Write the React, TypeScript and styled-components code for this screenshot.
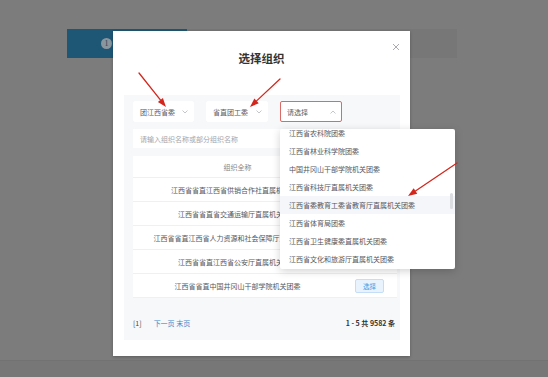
import React from "react";
import styled, { createGlobalStyle } from "styled-components";

const Global = createGlobalStyle`
  html, body { margin: 0; padding: 0; }
  body { font-family: "Noto Sans CJK SC", "Noto Sans", sans-serif; background: #7c7c7c; }
`;

const Page = styled.div`
  position: relative;
  width: 548px;
  height: 377px;
  overflow: hidden;
  background: #7c7c7c;
  display: flex;
  flex-direction: column;
  padding-top: 29px;
  box-sizing: border-box;
`;

const StepBar = styled.div`
  margin-left: 67px;
  width: 390px;
  height: 29px;
  display: flex;
`;

const ActiveStep = styled.div`
  width: 120px;
  background: #1d5775;
  display: flex;
  align-items: center;
  padding-left: 34px;
  box-sizing: border-box;
`;

const StepNum = styled.span`
  width: 11px;
  height: 11px;
  border-radius: 50%;
  background: #8a969e;
  color: #2f4250;
  font-size: 8px;
  line-height: 11px;
  text-align: center;
  font-family: "Liberation Serif", serif;
`;

const RestStep = styled.div`
  flex: 1;
  background: #777777;
`;

const Spacer = styled.div`
  flex: 1;
`;

const BottomBand = styled.div`
  height: 16px;
  background: #777777;
  border-top: 1px solid #727272;
`;

const Modal = styled.div`
  position: absolute;
  left: 113px;
  top: 31px;
  width: 297px;
  height: 325px;
  background: #ffffff;
  box-shadow: 0 1px 3px rgba(0, 0, 0, 0.25);
  display: flex;
  flex-direction: column;
`;

const Close = styled.div`
  position: absolute;
  top: 12px;
  right: 10px;
  width: 8px;
  height: 8px;
  display: flex;
`;

const Title = styled.div`
  margin-top: 20px;
  text-align: center;
  font-size: 11.5px;
  line-height: 14px;
  font-weight: 700;
  color: #333;
`;

const Panel = styled.div`
  position: relative;
  margin: 30px 10px 0 11px;
  height: 245px;
  background: #f7f8fa;
  padding: 6px 3px 0 9px;
  box-sizing: border-box;
  display: flex;
  flex-direction: column;
`;

const SelectRow = styled.div`
  display: flex;
  gap: 12px;
  height: 21px;
`;

const SelectWrap = styled.div`
  position: relative;
`;

const Select = styled.div<{ $open?: boolean; $w: number }>`
  width: ${(p) => p.$w}px;
  height: 21px;
  box-sizing: border-box;
  background: #fff;
  border: 1px solid ${(p) => (p.$open ? "#dc6a66" : "#fff")};
  border-radius: 2px;
  padding: 0 5px 0 6px;
  display: flex;
  align-items: center;
  justify-content: space-between;
  font-size: 7px;
  color: #5a5d63;
`;

const SearchRow = styled.div`
  margin-top: 7px;
  height: 19px;
  display: flex;
  gap: 7px;
`;

const SearchInput = styled.div`
  flex: 1;
  background: #fff;
  display: flex;
  align-items: center;
  padding-left: 7px;
  font-size: 7px;
  color: #a3a6ad;
`;

const SearchButton = styled.div`
  width: 35px;
  background: #4a98dc;
  border-radius: 2px;
`;

const Table = styled.div`
  margin-top: 8px;
  background: #fff;
  width: 264px;
  display: flex;
  flex-direction: column;
`;

const HeadRow = styled.div`
  height: 22px;
  display: grid;
  grid-template-columns: 209px 55px;
  align-items: center;
  border-bottom: 1px solid #eef0f4;
  box-sizing: border-box;
  font-size: 7px;
  color: #85888f;
  text-align: center;
`;

const Row = styled.div`
  height: 24px;
  display: grid;
  grid-template-columns: 209px 55px;
  align-items: center;
  border-bottom: 1px solid #eef0f4;
  box-sizing: border-box;
  font-size: 7px;
  color: #55585e;
  text-align: center;
  white-space: nowrap;
`;

const Cell = styled.div`
  display: flex;
  justify-content: center;
  align-items: center;
`;

const PickBtn = styled.div`
  width: 29px;
  height: 14px;
  box-sizing: border-box;
  background: #e8f3fe;
  border: 1px solid #c4def7;
  border-radius: 2px;
  color: #4a97de;
  font-size: 6.5px;
  line-height: 12px;
  text-align: center;
`;

const Pager = styled.div`
  margin-top: 18px;
  width: 262px;
  height: 14px;
  display: flex;
  align-items: center;
  font-size: 7px;
  color: #333;
`;

const PageNum = styled.span`
  color: #444;
  margin-right: 12px;
`;

const PageLinks = styled.span`
  color: #3e87c9;
`;

const Total = styled.span`
  margin-left: auto;
  font-weight: 700;
  color: #333;
`;

const Dropdown = styled.div`
  position: absolute;
  left: 0;
  top: 28px;
  width: 175px;
  height: 140px;
  background: #fff;
  box-shadow: 0 2px 8px rgba(0, 0, 0, 0.18);
  border-radius: 2px;
  overflow: hidden;
  z-index: 5;
`;

const OptionList = styled.div`
  margin-top: -5px;
  display: flex;
  flex-direction: column;
`;

const Option = styled.div<{ $hover?: boolean }>`
  height: 18px;
  line-height: 18px;
  padding-left: 9px;
  font-size: 7px;
  color: #55585e;
  white-space: nowrap;
  background: ${(p) => (p.$hover ? "#f4f6f9" : "transparent")};
`;

const Thumb = styled.div`
  position: absolute;
  right: 2px;
  top: 64px;
  width: 3px;
  height: 16px;
  border-radius: 2px;
  background: #dcdde0;
`;

const Annotations = styled.svg`
  position: absolute;
  left: 0;
  top: 0;
  width: 548px;
  height: 377px;
  pointer-events: none;
  z-index: 20;
`;

const Chevron = ({ up }: { up?: boolean }) => (
  <svg width="6" height="4" viewBox="0 0 6 4">
    <path
      d={up ? "M0.5 3.5 L3 1 L5.5 3.5" : "M0.5 0.5 L3 3 L5.5 0.5"}
      fill="none"
      stroke="#b4b7bd"
      strokeWidth="0.8"
    />
  </svg>
);

type Pt = [number, number];

const Arrow = ({ from, to }: { from: Pt; to: Pt }) => {
  const dx = to[0] - from[0];
  const dy = to[1] - from[1];
  const len = Math.hypot(dx, dy);
  const ux = dx / len;
  const uy = dy / len;
  const hl = 9;
  const hw = 3.2;
  const bx = to[0] - ux * hl;
  const by = to[1] - uy * hl;
  const px = -uy * hw;
  const py = ux * hw;
  return (
    <g>
      <line x1={from[0]} y1={from[1]} x2={bx} y2={by} stroke="#d3271d" strokeWidth="1.3" strokeLinecap="round" />
      <polygon
        points={`${to[0]},${to[1]} ${bx + px},${by + py} ${bx - px},${by - py}`}
        fill="#d3271d"
      />
    </g>
  );
};

const rows = [
  "江西省省直江西省供销合作社直属机关团委",
  "江西省省直省交通运输厅直属机关团委",
  "江西省省直江西省人力资源和社会保障厅直属机关团委",
  "江西省省直江西省公安厅直属机关团委",
  "江西省省直中国井冈山干部学院机关团委",
];

const options = [
  "江西省农科院团委",
  "江西省林业科学院团委",
  "中国井冈山干部学院机关团委",
  "江西省科技厅直属机关团委",
  "江西省委教育工委省教育厅直属机关团委",
  "江西省体育局团委",
  "江西省卫生健康委直属机关团委",
  "江西省文化和旅游厅直属机关团委",
];

export default function App() {
  return (
    <>
      <Global />
      <Page>
        <StepBar>
          <ActiveStep>
            <StepNum>1</StepNum>
          </ActiveStep>
          <RestStep />
        </StepBar>
        <Spacer />
        <BottomBand />

        <Modal>
          <Close>
            <svg width="8" height="8" viewBox="0 0 8 8">
              <path d="M1 1 L7 7 M7 1 L1 7" stroke="#a0a3a8" strokeWidth="0.9" />
            </svg>
          </Close>
          <Title>选择组织</Title>
          <Panel>
            <SelectRow>
              <Select $w={61}>
                <span>团江西省委</span>
                <Chevron />
              </Select>
              <Select $w={62}>
                <span>省直团工委</span>
                <Chevron />
              </Select>
              <SelectWrap>
                <Select $w={62} $open>
                  <span>请选择</span>
                  <Chevron up />
                </Select>
                <Dropdown>
                  <OptionList>
                    {options.map((o, i) => (
                      <Option key={o} $hover={i === 4}>
                        {o}
                      </Option>
                    ))}
                  </OptionList>
                  <Thumb />
                </Dropdown>
              </SelectWrap>
            </SelectRow>
            <SearchRow>
              <SearchInput>请输入组织名称或部分组织名称</SearchInput>
              <SearchButton />
            </SearchRow>
            <Table>
              <HeadRow>
                <Cell>组织全称</Cell>
                <Cell />
              </HeadRow>
              {rows.map((r, i) => (
                <Row key={r}>
                  <Cell>{r}</Cell>
                  <Cell>{i === rows.length - 1 && <PickBtn>选择</PickBtn>}</Cell>
                </Row>
              ))}
            </Table>
            <Pager>
              <PageNum>[1]</PageNum>
              <PageLinks>下一页 末页</PageLinks>
              <Total>1 - 5 共 9582 条</Total>
            </Pager>
          </Panel>
        </Modal>

        <Annotations viewBox="0 0 548 377">
          <Arrow from={[139, 73]} to={[166, 107]} />
          <Arrow from={[280, 79]} to={[250, 107]} />
          <Arrow from={[457, 163]} to={[408, 196]} />
        </Annotations>
      </Page>
    </>
  );
}
